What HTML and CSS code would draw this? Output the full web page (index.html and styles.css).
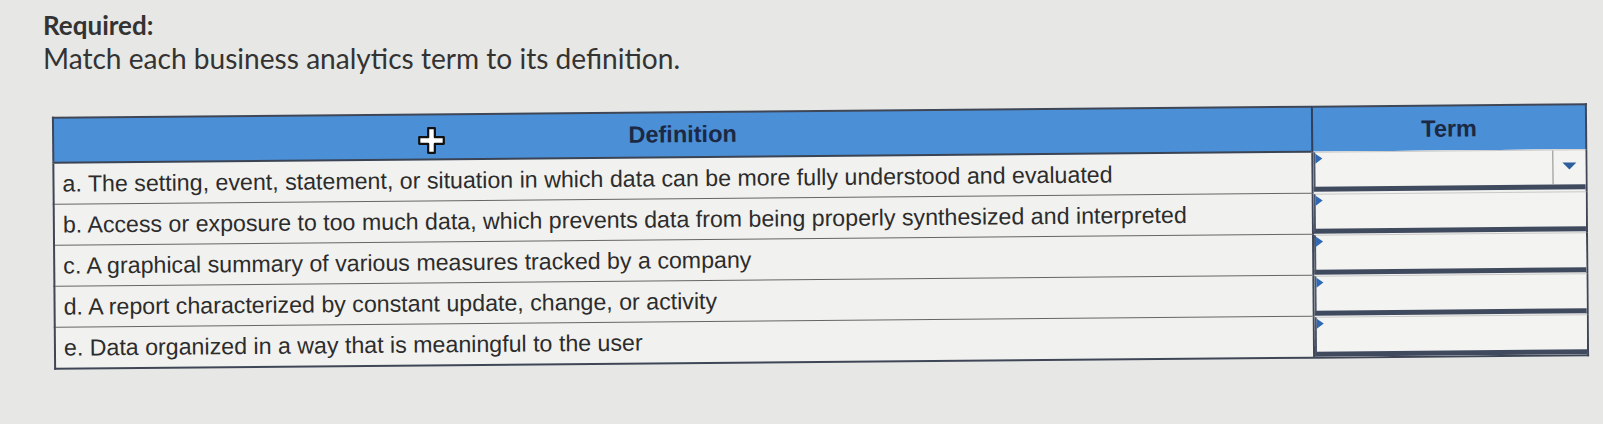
FILE: index.html
```html
<!DOCTYPE html>
<html lang="en">
<head>
<meta charset="utf-8">
<title>Required</title>
<link rel="stylesheet" href="styles.css">
</head>
<body>
<main class="page">
  <section class="intro">
    <h1 class="intro-title">Required:</h1>
    <p class="intro-text">Match each business analytics term to its definition.</p>
  </section>

  <table class="match">
    <thead>
      <tr>
        <th class="col-def">Definition</th>
        <th class="col-term">Term</th>
      </tr>
    </thead>
    <tbody>
      <tr>
        <td class="def">a. The setting, event, statement, or situation in which data can be more fully understood and evaluated</td>
        <td class="term"><div class="select select-open"><span class="select-btn"></span></div></td>
      </tr>
      <tr>
        <td class="def">b. Access or exposure to too much data, which prevents data from being properly synthesized and interpreted</td>
        <td class="term"><div class="select"></div></td>
      </tr>
      <tr>
        <td class="def">c. A graphical summary of various measures tracked by a company</td>
        <td class="term"><div class="select"></div></td>
      </tr>
      <tr>
        <td class="def">d. A report characterized by constant update, change, or activity</td>
        <td class="term"><div class="select"></div></td>
      </tr>
      <tr>
        <td class="def">e. Data organized in a way that is meaningful to the user</td>
        <td class="term"><div class="select"></div></td>
      </tr>
    </tbody>
  </table>

  <svg class="cursor" width="29" height="29" viewBox="0 0 26 26" aria-hidden="true">
    <path d="M10 2h6v8h8v6h-8v8h-6v-8H2v-6h8z" fill="#ffffff" stroke="#111111" stroke-width="2" stroke-linejoin="round"/>
  </svg>
</main>
</body>
</html>
```
FILE: styles.css
```css
html, body {
  margin: 0;
  padding: 0;
}

body {
  background: #e7e7e5;
  color: #2e2e2e;
  font-family: "Liberation Sans", Arial, sans-serif;
  width: 1603px;
  height: 424px;
  overflow: hidden;
}

.page {
  position: relative;
  padding: 0 0 0 43px;
}

.intro {
  padding-top: 9px;
  font-family: Lato, "Open Sans", sans-serif;
  color: #333333;
}

.intro-title {
  margin: 0;
  font-size: 26px;
  font-weight: 700;
  line-height: 32px;
}

.intro-text {
  margin: 0;
  font-size: 28.1px;
  line-height: 34px;
  font-weight: 400;
}

.match {
  margin: 35px 0 0 10px;
  width: 1535px;
  border-collapse: collapse;
  table-layout: fixed;
  border: 2px solid #3f4757;
  transform: rotate(-0.5deg);
}

.col-def {
  width: 1257px;
}

.match th {
  background: #4b8fd7;
  color: #1b2944;
  font-size: 23.5px;
  font-weight: 700;
  height: 43px;
  padding: 0;
  text-align: center;
  vertical-align: middle;
}

.match th.col-term {
  border-left: 2px solid #2f3f5c;
}

.match td {
  padding: 0;
  height: 40px;
  background: #f1f1ef;
}

.def {
  font-size: 23.2px;
  line-height: 26px;
  padding: 0 0 0 8px !important;
  border-top: 1px solid #666666;
  white-space: nowrap;
  color: #2c2c2c;
}

.match thead + tbody tr:first-child .def {
  border-top: 2px solid #3a4454;
}

.term {
  border-left: 2px solid #3f4757;
  vertical-align: top;
}

.select {
  position: relative;
  box-sizing: border-box;
  height: 40px;
  background: #f3f3f1;
  border-top: 1px solid #c9c9c9;
  border-bottom: 5px solid #404a5e;
  border-left: 2px solid #4d5668;
}

.select::before {
  content: "";
  position: absolute;
  left: 0;
  top: 1px;
  border-top: 5px solid transparent;
  border-bottom: 5px solid transparent;
  border-left: 7px solid #2f69b3;
}

.select-btn {
  position: absolute;
  right: 0;
  top: 0;
  bottom: 0;
  width: 32px;
  border-left: 1px solid #8a8a8a;
}

.select-btn::after {
  content: "";
  position: absolute;
  left: 9px;
  top: 12px;
  border-left: 7px solid transparent;
  border-right: 7px solid transparent;
  border-top: 7px solid #2d5f9f;
}

.cursor {
  position: absolute;
  left: 417px;
  top: 126px;
}
```
